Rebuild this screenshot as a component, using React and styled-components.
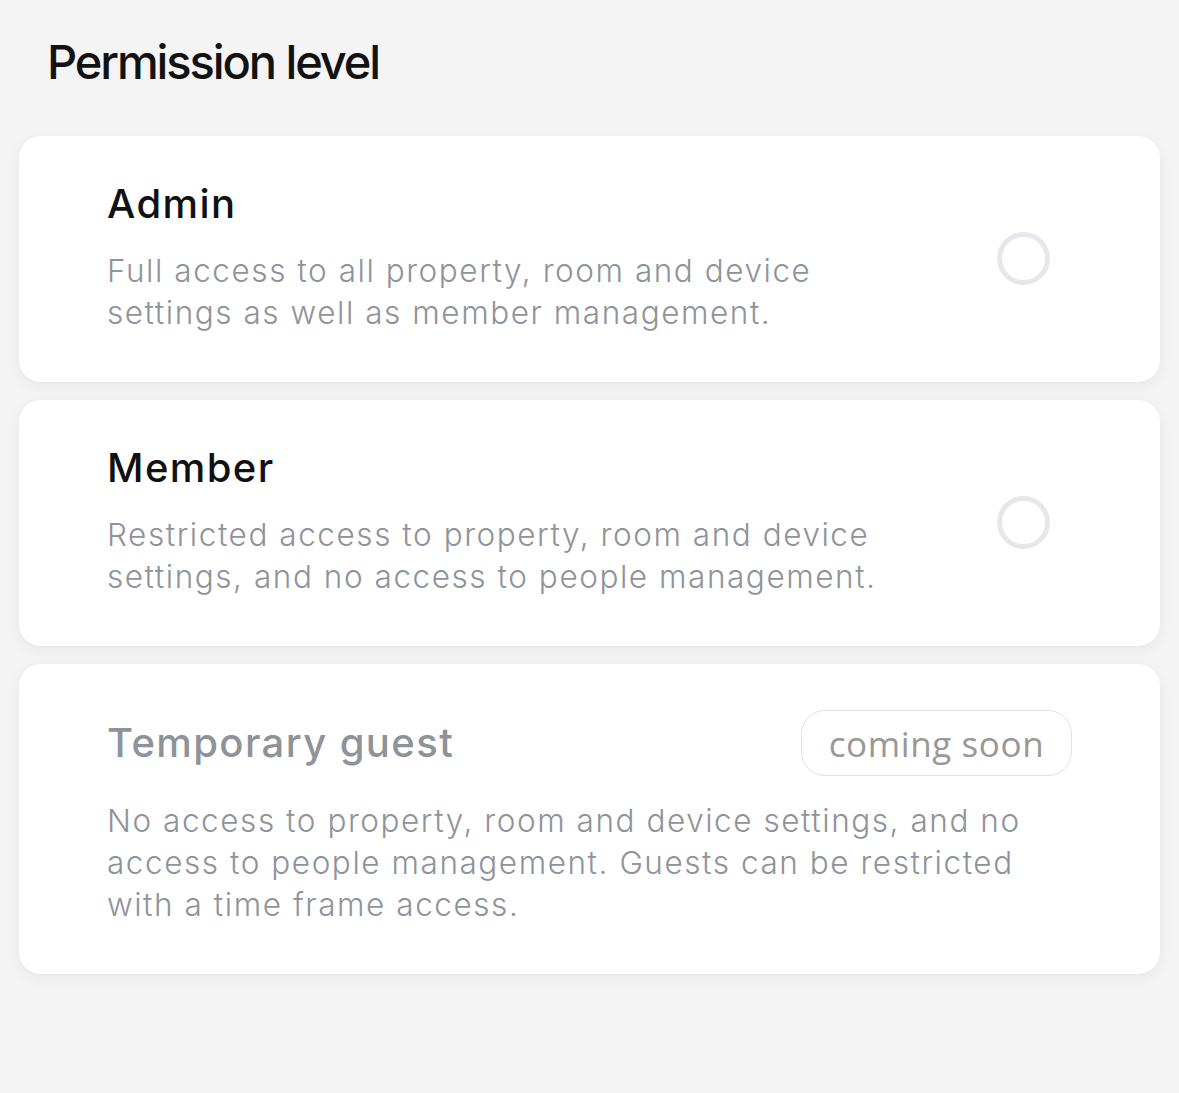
import React from "react";
import styled, { createGlobalStyle } from "styled-components";

const GlobalStyle = createGlobalStyle`
  html, body {
    margin: 0;
    padding: 0;
    background: #f4f4f4;
  }
  body {
    font-family: Inter, "Noto Sans", sans-serif;
    -webkit-font-smoothing: antialiased;
  }
`;

const Page = styled.div`
  min-height: 1093px;
  padding: 27px 19px 0 19px;
  box-sizing: border-box;
`;

const Heading = styled.h1`
  margin: 0 0 39px 28px;
  font-size: 47px;
  line-height: 70px;
  font-weight: 500;
  letter-spacing: -2.1px;
  color: #121212;
`;

const List = styled.div`
  display: flex;
  flex-direction: column;
  gap: 18px;
`;

const Card = styled.div`
  background: #ffffff;
  border-radius: 22px;
  box-shadow: 0 4px 14px rgba(0, 0, 0, 0.06);
  padding: 46px 88px 48px 88px;
  display: flex;
  align-items: center;
`;

const Content = styled.div`
  flex: 1;
  min-width: 0;
  max-width: ${(p) => (p.$wide ? "none" : "800px")};
`;

const Header = styled.div`
  display: flex;
  align-items: center;
  justify-content: space-between;
  margin-bottom: 24px;
`;

const Title = styled.h2`
  margin: 0;
  font-size: 40px;
  line-height: 44px;
  font-weight: 500;
  letter-spacing: 1.4px;
  color: ${(p) => (p.$disabled ? "#8e9299" : "#111111")};
`;

const Description = styled.p`
  margin: 0;
  font-size: 31.5px;
  line-height: 42px;
  font-weight: 300;
  letter-spacing: 1.55px;
  color: #8f939a;
`;

const Radio = styled.span`
  flex: none;
  width: 43px;
  height: 43px;
  border-radius: 50%;
  border: 5px solid #e6e7eb;
  margin-left: auto;
  margin-right: 22px;
`;

const Badge = styled.span`
  flex: none;
  box-sizing: border-box;
  width: 271px;
  height: 66px;
  border: 1.5px solid #e2e2e2;
  border-radius: 24px;
  display: flex;
  align-items: center;
  justify-content: center;
  font-family: "Open Sans", Inter, sans-serif;
  font-size: 35px;
  font-weight: 500;
  letter-spacing: 0.6px;
  color: #989898;
`;

const roles = [
  {
    name: "Admin",
    text: "Full access to all property, room and device settings as well as member management.",
  },
  {
    name: "Member",
    text: "Restricted access to property, room and device settings, and no access to people management.",
  },
  {
    name: "Temporary guest",
    text: "No access to property, room and device settings, and no access to people management. Guests can be restricted with a time frame access.",
    soon: true,
  },
];

export default function App() {
  return (
    <Page>
      <GlobalStyle />
      <Heading>Permission level</Heading>
      <List>
        {roles.map((r) => (
          <Card key={r.name}>
            <Content $wide={r.soon}>
              <Header>
                <Title $disabled={r.soon}>{r.name}</Title>
                {r.soon && <Badge>coming soon</Badge>}
              </Header>
              <Description>{r.text}</Description>
            </Content>
            {!r.soon && <Radio />}
          </Card>
        ))}
      </List>
    </Page>
  );
}
